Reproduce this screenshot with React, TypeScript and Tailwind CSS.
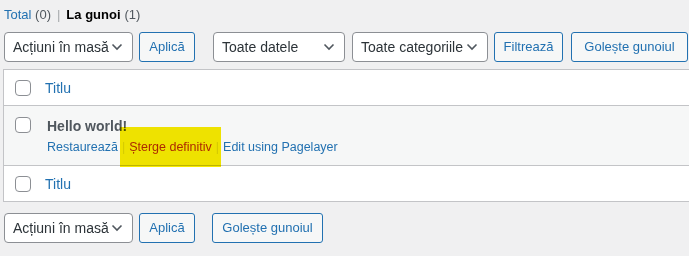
function Chevron() {
  return (
    <svg width="12" height="8" viewBox="0 0 12 8" fill="none" className="shrink-0">
      <path d="M1.5 1.5 L6 6 L10.5 1.5" stroke="#50575e" strokeWidth="1.6" />
    </svg>
  )
}

function Select({ label, width }: { label: string; width: string }) {
  return (
    <div
      className={`flex h-[30px] ${width} items-center justify-between rounded-[4px] border border-[#8c8f94] bg-white pl-2 pr-[9px] text-[14px] text-[#2c3338]`}
    >
      <span>{label}</span>
      <Chevron />
    </div>
  )
}

function Button({ label, width }: { label: string; width: string }) {
  return (
    <div
      className={`flex h-[30px] ${width} items-center justify-center rounded-[3px] border border-[#2271b1] bg-[#f6f7f7] text-[13px] text-[#2271b1]`}
    >
      {label}
    </div>
  )
}

function Checkbox() {
  return <div className="h-4 w-4 shrink-0 rounded-[4px] border border-[#8c8f94] bg-white" />
}

export default function App() {
  return (
    <div className="relative h-[256px] w-[689px] overflow-hidden bg-[#f0f0f1] font-['Liberation_Sans',Arial,sans-serif]">
      <div className="flex h-[30px] items-center pl-1 text-[13px]">
        <span className="text-[#2271b1]">Total <span className="text-[#50575e]">(0)</span></span>
        <span className="mx-[6px] text-[#a7aaad]">|</span>
        <span className="font-semibold text-black">La gunoi</span>
        <span className="ml-1 text-[#50575e]">(1)</span>
      </div>

      <div className="mt-[2px] flex items-center pl-1">
        <Select label="Acțiuni în masă" width="w-[129px]" />
        <div className="ml-[6px]">
          <Button label="Aplică" width="w-[56px]" />
        </div>
        <div className="ml-[18px]">
          <Select label="Toate datele" width="w-[132px]" />
        </div>
        <div className="ml-[7px]">
          <Select label="Toate categoriile" width="w-[136px]" />
        </div>
        <div className="ml-[6px]">
          <Button label="Filtrează" width="w-[69px]" />
        </div>
        <div className="ml-[8px]">
          <Button label="Golește gunoiul" width="w-[117px]" />
        </div>
      </div>

      <div className="ml-[3px] mt-[7px] w-[720px] border border-[#c3c4c7] bg-white text-[14px]">
        <div className="flex h-[36px] items-center border-b border-[#c3c4c7] pl-[11px]">
          <Checkbox />
          <span className="ml-[14px] pt-px text-[#2271b1]">Titlu</span>
        </div>
        <div className="flex h-[60px] items-start border-b border-[#c3c4c7] bg-[#f6f7f7] pl-[11px] pt-[11px]">
          <Checkbox />
          <div className="ml-4 flex flex-col">
            <span className="text-[14px] font-semibold leading-[18px] text-[#50575e]">Hello world!</span>
            <div className="mt-[3px] flex items-center text-[12.5px] leading-[18px]">
              <span className="text-[#2271b1]">Restaurează</span>
              <span className="mx-[4px] text-[#dcdcde]">|</span>
              <span className="text-[#b32d2e]">Șterge definitiv</span>
              <span className="mx-[4px] text-[#dcdcde]">|</span>
              <span className="text-[#2271b1]">Edit using Pagelayer</span>
            </div>
          </div>
        </div>
        <div className="flex h-[35px] items-center pl-[11px]">
          <Checkbox />
          <span className="ml-[14px] pt-px text-[#2271b1]">Titlu</span>
        </div>
      </div>

      <div className="mt-[11px] flex items-center pl-1">
        <Select label="Acțiuni în masă" width="w-[129px]" />
        <div className="ml-[6px]">
          <Button label="Aplică" width="w-[56px]" />
        </div>
        <div className="ml-[17px]">
          <Button label="Golește gunoiul" width="w-[111px]" />
        </div>
      </div>

      <div className="pointer-events-none absolute left-[120px] top-[127px] h-[40px] w-[101px] bg-[#f7ea00] mix-blend-multiply" />
    </div>
  )
}
